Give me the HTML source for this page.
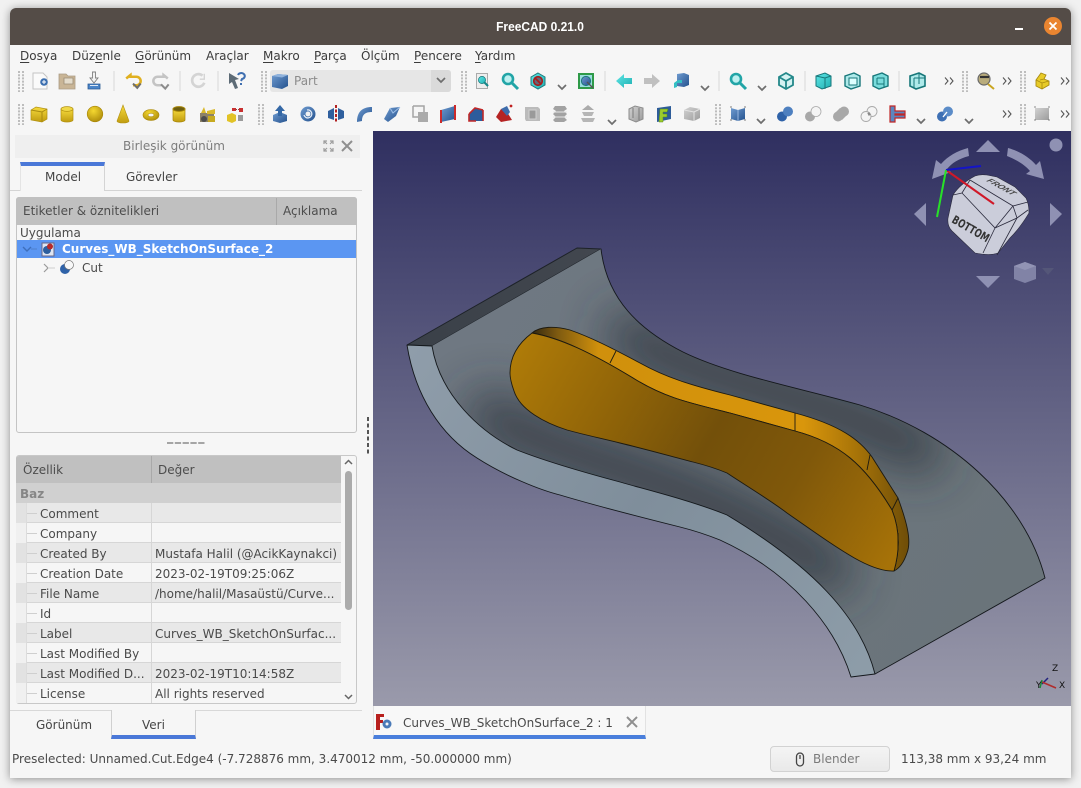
<!DOCTYPE html>
<html><head><meta charset="utf-8"><style>
html,body{margin:0;padding:0;width:1081px;height:788px;overflow:hidden;background:#f1f1f1}
*{box-sizing:border-box}
body{font-family:"DejaVu Sans","Liberation Sans",sans-serif;font-size:12px;color:#454545}
.a{position:absolute;white-space:nowrap}
#win{position:absolute;left:10px;top:8px;width:1061px;height:770px;background:#f6f6f6;border-radius:6px 6px 0 0;box-shadow:0 1px 9px rgba(0,0,0,.42)}
#tb{position:absolute;left:10px;top:8px;width:1061px;height:37px;background:#544c47;border-radius:6px 6px 0 0}
u{text-underline-offset:2px}
.m{top:49px;color:#3c3c3c;line-height:14px}
.r{position:absolute;left:16px;width:325px;height:20px;border-bottom:1px solid #d6d6d6}
.r b{position:absolute;left:135px;top:0;width:1px;height:20px;background:#d6d6d6}
.r span{position:absolute;top:4px;line-height:14px;white-space:nowrap;color:#4a4a4a}
.r i{position:absolute;left:0;top:0;width:10px;height:20px}
.r em{position:absolute;left:10px;top:0;width:1px;height:20px;background:#dcdcdc}
.r s{position:absolute;left:11px;top:10px;width:10px;height:1px;background:#cfcfcf}
</style></head><body>
<div id="win"></div><div id="tb"></div>
<div class="a" style="left:440px;width:200px;text-align:center;top:19px;color:#fff;font-weight:bold;font-size:13px;line-height:15px;font-family:'Liberation Sans',sans-serif;transform:scaleX(.92)">FreeCAD 0.21.0</div>
<div class="a" style="left:1015px;top:28px;width:8px;height:2px;background:#fff"></div>

<div class="a m" style="left:20px"><u>D</u>osya</div>
<div class="a m" style="left:72px">Düz<u>e</u>nle</div>
<div class="a m" style="left:135px"><u>G</u>örünüm</div>
<div class="a m" style="left:206px">Araçlar</div>
<div class="a m" style="left:263px"><u>M</u>akro</div>
<div class="a m" style="left:314px"><u>P</u>arça</div>
<div class="a m" style="left:361px">Ölçüm</div>
<div class="a m" style="left:414px"><u>P</u>encere</div>
<div class="a m" style="left:475px"><u>Y</u>ardım</div>

<!-- workbench combo -->
<div class="a" style="left:270px;top:70px;width:181px;height:22px;background:#e6e6e6;border-radius:3px"></div>
<div class="a" style="left:431px;top:70px;width:20px;height:22px;background:#dadada;border-radius:0 3px 3px 0"></div>
<div class="a" style="left:294px;top:74px;color:#8c8c8c;line-height:14px">Part</div>

<!-- left dock -->
<div class="a" style="left:15px;top:135px;width:345px;height:23px;background:#efefef"></div>
<div class="a" style="left:123px;top:139px;color:#7d7d7d;line-height:14px">Birleşik görünüm</div>
<div class="a" style="left:10px;top:190px;width:352px;height:1px;background:#d4d4d4"></div>
<div class="a" style="left:20px;top:162px;width:85px;height:29px;background:#f6f6f6;border-right:1px solid #d4d4d4;border-left:1px solid #e4e4e4;border-top:4px solid #4a78d8"></div>
<div class="a" style="left:45px;top:170px;line-height:14px">Model</div>
<div class="a" style="left:126px;top:170px;line-height:14px">Görevler</div>

<!-- tree -->
<div class="a" style="left:16px;top:197px;width:341px;height:236px;background:#f6f6f6;border:1px solid #c4c4c4;border-radius:3px"></div>
<div class="a" style="left:16px;top:197px;width:341px;height:28px;background:#c0c0c0;border-radius:3px 3px 0 0"></div>
<div class="a" style="left:276px;top:198px;width:1px;height:27px;background:#a9a9a9"></div>
<div class="a" style="left:23px;top:204px;color:#4d4d4d;line-height:14px">Etiketler &amp; öznitelikleri</div>
<div class="a" style="left:283px;top:204px;color:#4d4d4d;line-height:14px">Açıklama</div>
<div class="a" style="left:20px;top:226px;color:#4a4a4a;line-height:14px">Uygulama</div>
<div class="a" style="left:17px;top:240px;width:339px;height:18px;background:#5b96f2"></div>
<div class="a" style="left:62px;top:242px;color:#fff;font-weight:bold;line-height:14px">Curves_WB_SketchOnSurface_2</div>
<div class="a" style="left:82px;top:261px;color:#4a4a4a;line-height:14px">Cut</div>

<!-- properties -->
<div class="a" style="left:16px;top:455px;width:341px;height:249px;background:#f6f6f6;border:1px solid #c8c8c8;border-radius:3px"></div>
<div class="a" style="left:16px;top:456px;width:325px;height:27px;background:#c0c0c0;border-radius:3px 0 0 0"></div>
<div class="a" style="left:151px;top:456px;width:1px;height:27px;background:#a9a9a9"></div>
<div class="a" style="left:23px;top:463px;color:#4d4d4d;line-height:14px">Özellik</div>
<div class="a" style="left:158px;top:463px;color:#4d4d4d;line-height:14px">Değer</div>
<div class="a" style="left:16px;top:483px;width:325px;height:20px;background:#d0d0d0"></div>
<div class="a" style="left:20px;top:487px;color:#868686;font-weight:bold;line-height:14px">Baz</div>

<div class="r" style="top:503px;background:#e8e8e8"><i style="background:#e2e2e2"></i><em></em><s></s><b></b><span style="left:24px">Comment</span></div>
<div class="r" style="top:523px;background:#f6f6f6"><i style="background:#f0f0f0"></i><em></em><s></s><b></b><span style="left:24px">Company</span></div>
<div class="r" style="top:543px;background:#e8e8e8"><i style="background:#e2e2e2"></i><em></em><s></s><b></b><span style="left:24px">Created By</span><span style="left:139px">Mustafa Halil (@AcikKaynakci)</span></div>
<div class="r" style="top:563px;background:#f6f6f6"><i style="background:#f0f0f0"></i><em></em><s></s><b></b><span style="left:24px">Creation Date</span><span style="left:139px">2023-02-19T09:25:06Z</span></div>
<div class="r" style="top:583px;background:#e8e8e8"><i style="background:#e2e2e2"></i><em></em><s></s><b></b><span style="left:24px">File Name</span><span style="left:139px">/home/halil/Masaüstü/Curve...</span></div>
<div class="r" style="top:603px;background:#f6f6f6"><i style="background:#f0f0f0"></i><em></em><s></s><b></b><span style="left:24px">Id</span></div>
<div class="r" style="top:623px;background:#e8e8e8"><i style="background:#e2e2e2"></i><em></em><s></s><b></b><span style="left:24px">Label</span><span style="left:139px">Curves_WB_SketchOnSurfac...</span></div>
<div class="r" style="top:643px;background:#f6f6f6"><i style="background:#f0f0f0"></i><em></em><s></s><b></b><span style="left:24px">Last Modified By</span></div>
<div class="r" style="top:663px;background:#e8e8e8"><i style="background:#e2e2e2"></i><em></em><s></s><b></b><span style="left:24px">Last Modified D...</span><span style="left:139px">2023-02-19T10:14:58Z</span></div>
<div class="r" style="top:683px;height:20px;background:#f6f6f6;border-bottom:0"><i style="background:#f0f0f0"></i><em></em><s></s><b></b><span style="left:24px">License</span><span style="left:139px">All rights reserved</span></div>

<!-- scrollbar -->
<div class="a" style="left:345px;top:471px;width:7px;height:139px;background:#ababab;border-radius:4px"></div>

<!-- bottom tabs -->
<div class="a" style="left:10px;top:710px;width:352px;height:1px;background:#d8d8d8"></div>
<div class="a" style="left:111px;top:710px;width:85px;height:29px;background:#f6f6f6;border-left:1px solid #d0d0d0;border-right:1px solid #d0d0d0;border-bottom:4px solid #4a78d8"></div>
<div class="a" style="left:36px;top:718px;line-height:14px">Görünüm</div>
<div class="a" style="left:142px;top:718px;line-height:14px">Veri</div>

<!-- viewport -->
<div class="a" style="left:373px;top:131px;width:698px;height:575px;background:linear-gradient(#2f2f60,#9a9aab)"></div>

<!-- MDI tab -->
<div class="a" style="left:373px;top:706px;width:273px;height:33px;background:#f8f8f8;border-left:1px solid #e2e2e2;border-right:1px solid #e2e2e2;border-bottom:4px solid #4a7fdc"></div>
<div class="a" style="left:403px;top:716px;color:#4a4a4a;line-height:14px">Curves_WB_SketchOnSurface_2 : 1</div>

<!-- status -->
<div class="a" style="left:12px;top:752px;color:#4a4a4a;line-height:14px">Preselected: Unnamed.Cut.Edge4 (-7.728876 mm, 3.470012 mm, -50.000000 mm)</div>
<div class="a" style="left:770px;top:746px;width:120px;height:26px;background:linear-gradient(#f4f4f4,#e9e9e9);border:1px solid #d2d2d2;border-radius:4px"></div>
<div class="a" style="left:813px;top:752px;color:#7a7a7a;line-height:14px">Blender</div>
<div class="a" style="left:901px;top:752px;color:#4a4a4a;line-height:14px">113,38 mm x 93,24 mm</div>

<svg class="a" style="left:0;top:0" width="1081" height="788" viewBox="0 0 1081 788" xmlns="http://www.w3.org/2000/svg">
<defs>
<linearGradient id="gd" x1="0" y1="0" x2="0" y2="1"><stop offset="0" stop-color="#f6da3c"/><stop offset="1" stop-color="#c09c10"/></linearGradient>
<radialGradient id="gs" cx=".4" cy=".3" r=".8"><stop offset="0" stop-color="#f5d830"/><stop offset="1" stop-color="#a88608"/></radialGradient>
<linearGradient id="bl" x1="0" y1="0" x2="1" y2="1"><stop offset="0" stop-color="#6f9bd0"/><stop offset="1" stop-color="#24528e"/></linearGradient>
<linearGradient id="te" x1="0" y1="0" x2="1" y2="1"><stop offset="0" stop-color="#5fe6e6"/><stop offset="1" stop-color="#1fb0b2"/></linearGradient>
<linearGradient id="gr" x1="0" y1="0" x2="1" y2="1"><stop offset="0" stop-color="#d2d2d2"/><stop offset="1" stop-color="#9c9c9c"/></linearGradient>
<linearGradient id="fl" gradientUnits="userSpaceOnUse" x1="510" y1="350" x2="885" y2="570"><stop offset="0" stop-color="#b07c08"/><stop offset=".25" stop-color="#936608"/><stop offset=".5" stop-color="#73500a"/><stop offset=".72" stop-color="#80580a"/><stop offset="1" stop-color="#a67208"/></linearGradient>
<linearGradient id="wa" gradientUnits="userSpaceOnUse" x1="535" y1="0" x2="908" y2="0"><stop offset="0" stop-color="#3c2e10"/><stop offset=".06" stop-color="#7e5a10"/><stop offset=".17" stop-color="#d0900c"/><stop offset=".72" stop-color="#d9960c"/><stop offset=".86" stop-color="#a87408"/><stop offset="1" stop-color="#6f4e08"/></linearGradient>
<linearGradient id="st" gradientUnits="userSpaceOnUse" x1="410" y1="350" x2="860" y2="670"><stop offset="0" stop-color="#8f9daa"/><stop offset=".5" stop-color="#7f8e9b"/><stop offset="1" stop-color="#8d9ca8"/></linearGradient>
<linearGradient id="su" gradientUnits="userSpaceOnUse" x1="500" y1="280" x2="1000" y2="620"><stop offset="0" stop-color="#6f7882"/><stop offset="1" stop-color="#6a747a"/></linearGradient>
<linearGradient id="to" gradientUnits="userSpaceOnUse" x1="407" y1="345" x2="600" y2="250"><stop offset="0" stop-color="#3a4048"/><stop offset="1" stop-color="#42474f"/></linearGradient>
<filter id="blur" filterUnits="userSpaceOnUse" x="373" y="200" width="698" height="500"><feGaussianBlur stdDeviation="24"/></filter>
<clipPath id="scl"><path d="M432,346 L601,249 C607,300 640,330 683,352 C730,375 800,388 860,405 C950,432 1025,500 1045,578 L875,674 C860,615 810,565 727,515 C690,500 640,488 620,482 C590,474 550,463 517,450 C480,432 440,395 432,346Z"/></clipPath>

<g id="chev"><path d="M-4,-2 L0,2 L4,-2" fill="none" stroke="#6e6e6e" stroke-width="1.7"/></g>
<g id="dchev"><path d="M-4,-3.5 L-1,0 L-4,3.5 M1,-3.5 L4,0 L1,3.5" fill="none" stroke="#555" stroke-width="1.1"/></g>
<g id="grip"><path d="M-2,-10V11M2,-10V11" stroke="#bdbdbd" stroke-width="2" stroke-dasharray="2 1.2"/></g>
<g id="sep"><path d="M0,-10V10" stroke="#d8d8d8" stroke-width="1"/></g>
<g id="teal"><path d="M-7,-5 L2,-8 L8,-5 L8,5 L-1,8 L-7,5Z" fill="url(#te)" stroke="#17777a" stroke-width="1"/></g>
</defs>

<!-- close button -->
<circle cx="1053" cy="26" r="9" fill="#ea8530"/>
<path d="M1049.5,22.5 L1056.5,29.5 M1056.5,22.5 L1049.5,29.5" stroke="#fff" stroke-width="1.8"/>

<!-- combo -->
<g transform="translate(280,81)"><path d="M-8,-5 L-2,-7 L8,-6 L8,5 L2,8 L-8,6Z" fill="url(#bl)"/><path d="M-8,-5 L-2,-7 L8,-6 L2,-3.5Z" fill="#8fb2dc"/></g>
<use href="#chev" x="441" y="80"/>

<!-- splitter -->
<path d="M167,443 H205" stroke="#8a8a8a" stroke-width="1.6" stroke-dasharray="6.300 1.500"/>

<!-- grips -->
<use href="#grip" x="21" y="81"/><use href="#grip" x="264" y="81"/><use href="#grip" x="464" y="81"/><use href="#grip" x="965" y="81"/><use href="#grip" x="1023" y="81"/>
<use href="#grip" x="21" y="114"/><use href="#grip" x="261" y="114"/><use href="#grip" x="718" y="114"/><use href="#grip" x="1023" y="114"/>
<!-- seps -->
<use href="#sep" x="114" y="81"/><use href="#sep" x="180" y="81"/><use href="#sep" x="218" y="81"/><use href="#sep" x="605" y="81"/><use href="#sep" x="719" y="81"/><use href="#sep" x="805" y="81"/><use href="#sep" x="899" y="81"/>

<!-- row 1 -->
<g transform="translate(40,81)"><path d="M-7,-8 H3 L7,-4 V8 H-7Z" fill="#fafafa" stroke="#c4c4c4"/><circle cx="4" cy="1" r="3.8" fill="#3c6fb0"/><path d="M2,1H6M4,-1V3" stroke="#fff"/></g>
<g transform="translate(67,81)"><path d="M-8,-7 H-1 L1,-5 H8 V8 H-8Z" fill="#c9b596" stroke="#ab9c85" stroke-width=".8"/><path d="M-3,-3H6V3H-3Z" fill="#e4dccc" stroke="#9b8c75" stroke-width=".8"/></g>
<g transform="translate(94,81)"><path d="M-1.500,-9 H1.500 V-3 H4 L0,2 L-4,-3 H-1.500Z" fill="#f2f2f2" stroke="#808080" stroke-width=".9"/><path d="M-6,3 H6 V8 H-6Z" fill="#4a84c8" stroke="#2b5a94" stroke-width=".8"/><path d="M-4,4.500 H4" stroke="#dde8f5" /></g>
<g transform="translate(133,81) scale(.85)"><path d="M-8,-3 L-3,-7 V-5 H4 A5,5 0 0 1 4,5 H0" fill="none" stroke="#e0b020" stroke-width="3"/><path d="M0,3 L5,8 L9,3" fill="none" stroke="#6e6e6e" stroke-width="2.400"/></g>
<g transform="translate(161,81) scale(.85)"><path d="M8,-3 L3,-7 V-5 H-4 A5,5 0 0 0 -4,5 H0" fill="none" stroke="#c4c4c4" stroke-width="3"/><path d="M0,4 L5,9 L9,4" fill="none" stroke="#8c8c8c" stroke-width="2.400"/></g>
<g transform="translate(198,81) scale(.9)"><path d="M5,-6 A7,7 0 1 0 7,2" fill="none" stroke="#d4d4d4" stroke-width="3"/><path d="M2,-2 H7 V-8" fill="none" stroke="#d4d4d4" stroke-width="1.500"/></g>
<g transform="translate(237,81)"><path d="M-8,-8 L2,-2 L-2,-1 L1,7 L-2,8 L-5,1 L-8,3Z" fill="#5d6b76"/><path d="M1,-6 A3.500,3 0 1 1 5,-2 L4,0 M4,2V4" fill="none" stroke="#3f6fb0" stroke-width="2"/></g>

<g transform="translate(482,81)"><path d="M-5.500,-7.500 H5.500 V7.500 H-5.500Z" fill="#eee" stroke="#aaa"/><circle cx="0" cy="-1" r="3.600" fill="url(#te)" stroke="#17777a" stroke-width=".7"/><path d="M2,1 L6,5" stroke="#17888a" stroke-width="2.200"/></g>
<g transform="translate(510,81)"><circle cx="-2" cy="-2" r="5" fill="#bdf0f0" stroke="#22a5a7" stroke-width="2.600"/><path d="M2,2 L8,8" stroke="#22a5a7" stroke-width="3"/></g>
<g transform="translate(538,81)"><path d="M0,-8 L7,-4 V4 L0,8 L-7,4 V-4Z" fill="url(#te)" stroke="#1c7a7c"/><circle r="4.300" fill="#666878" stroke="#a81c1c" stroke-width="1.600"/><path d="M-3,-3 L3,3" stroke="#a81c1c" stroke-width="1.600"/></g>
<use href="#chev" x="562" y="87"/>
<g transform="translate(586,81)"><path d="M-7,-7 H7 V7 H-7Z" fill="#9adede" stroke="#2e9a48" stroke-width="2"/><circle cy="0" r="4.600" fill="url(#bl)" stroke="#1c7a7c"/><path d="M1,1 L7,7" stroke="#555" stroke-width="1.400"/></g>
<g transform="translate(624,81)"><path d="M-8,0 L0,-7 V-3 H8 V3 H0 V7Z" fill="url(#te)"/></g>
<g transform="translate(652,81)"><path d="M8,0 L0,-7 V-3 H-8 V3 H0 V7Z" fill="#c0c0c0"/></g>
<g transform="translate(681,81)"><path d="M-4,-7 L3,-8 L8,-6 V4 L3,6 L-4,5Z" fill="url(#bl)"/><path d="M-7,7 V2 L-3,-1 H1 V2 H-4 V6Z" fill="#34c0c4"/></g>
<use href="#chev" x="705" y="88"/>
<g transform="translate(738,81)"><circle cx="-2" cy="-2" r="5" fill="#bdf0f0" stroke="#22a5a7" stroke-width="2.600"/><path d="M2,2 L8,8" stroke="#22a5a7" stroke-width="3"/></g>
<use href="#chev" x="762" y="88"/>
<g id="iso" transform="translate(786,81)" fill="none" stroke="#23888a" stroke-width="1.800"><path d="M0,-8 L7,-4 V4 L0,8 L-7,4 V-4Z" fill="#d4f2f2"/><path d="M-7,-4 L0,0 L7,-4 M0,0 V8"/></g>
<g transform="translate(823,81)"><use href="#teal"/><path d="M-7,-5 L2,-3 L8,-5 M2,-3 V8" stroke="#17777a" fill="none"/></g>
<g transform="translate(852,81)"><path d="M-7,-5 L2,-8 L8,-5 L8,5 L-1,8 L-7,5Z" fill="#aeeaea" stroke="#17777a" stroke-width="1.400"/><path d="M-3,-3 H5 V4 H-3Z" fill="#dff" stroke="#17777a"/></g>
<g transform="translate(880,81)"><path d="M-7,-5 L2,-8 L8,-5 L8,5 L-1,8 L-7,5Z" fill="#7adcdc" stroke="#17777a" stroke-width="1.400"/><path d="M-3,-3 H4 V7 M-3,-3 V3 H4" fill="none" stroke="#17777a"/></g>
<g transform="translate(917,81)"><path d="M-7,-5 L2,-8 L8,-5 L8,5 L-1,8 L-7,5Z" fill="#aeeaea" stroke="#17777a" stroke-width="1.600"/><path d="M-3,-3 H8 M-3,-3 V7 M2,-8 V3" fill="none" stroke="#17777a"/></g>
<use href="#dchev" x="949" y="81"/>
<g transform="translate(985,81)"><circle cx="-1" cy="-2" r="6" fill="#b9ac7c" stroke="#6a6a6a" stroke-width="1.200"/><path d="M-5,-4 H4" stroke="#333" stroke-width="2.200"/><path d="M3,3 L9,8" stroke="#c9a520" stroke-width="2"/></g>
<use href="#dchev" x="1007" y="81"/>
<g transform="translate(1042,81)"><path d="M-6,-1 L-1,-8 L4,-6 L2,-2 L7,0 V4 L0,8 L-6,5Z" fill="#e8cb28" stroke="#a88a10" stroke-width=".9"/><path d="M-6,-1 L0,2 L7,0 M0,2 V8 M-2,-1 L2,-2" fill="none" stroke="#a88a10" stroke-width=".8"/></g>
<use href="#dchev" x="1065" y="81"/>

<!-- row 2 gold primitives -->
<g transform="translate(39,114)"><path d="M-8,-4 L-3,-7 L8,-5 V5 L3,8 L-8,6Z" fill="url(#gd)" stroke="#b29110" stroke-width=".7"/><path d="M-8,-4 L3,-2 L8,-5 M3,-2 V8" fill="none" stroke="#a88a10"/></g>
<g transform="translate(67,114)"><path d="M-6,-5 V6 A6,2 0 0 0 6,6 V-5Z" fill="url(#gd)" stroke="#b29110" stroke-width=".7"/><ellipse cy="-5" rx="6" ry="2.400" fill="#f0d848" stroke="#b29110" stroke-width=".7"/></g>
<circle cx="95" cy="114" r="7.800" fill="url(#gs)" stroke="#a88608" stroke-width=".6"/>
<path d="M123,105 L129,121 A6,2 0 0 1 117,121Z" fill="url(#gd)" stroke="#b29110" stroke-width=".6"/>
<g transform="translate(151,115)"><ellipse rx="8" ry="5.500" fill="url(#gs)" stroke="#a88608" stroke-width=".6"/><ellipse rx="3" ry="1.800" fill="#f6f6f6" stroke="#a88608" stroke-width=".6"/></g>
<g transform="translate(179,114)"><path d="M-6,-5 V6 A6,2 0 0 0 6,6 V-5Z" fill="url(#gd)" stroke="#a88608" stroke-width=".7"/><ellipse cy="-5" rx="6" ry="2.400" fill="#6d5e10" stroke="#a88608" stroke-width="1"/></g>
<g transform="translate(207,115)"><path d="M-7,-2 H7 V7 H-7Z" fill="#8c8268"/><path d="M-3,-8 L-1,-2 H-6Z" fill="#d9b92a"/><path d="M0,-4 L8,-6 V-1 H0Z" fill="#d9b92a"/><circle cx="-3" cy="4" r="3" fill="#4d4d4d"/><path d="M1,1 H8 V7 H1Z" fill="#c7aa20"/></g>
<g transform="translate(235,115)"><path d="M-8,0 L-3,-2 L1,0 V6 L-3,8 L-8,6Z" fill="#e2c326"/><path d="M4,-7 H8 V-3 H4Z M-3,-7 H1 V-4 H-3Z" fill="#c83030"/><path d="M3,0 H8 V6 H3Z" fill="#9a9a9a"/><path d="M1,-5.500 H4" stroke="#8c4040" stroke-dasharray="1 1"/></g>

<!-- row 2 part -->
<g transform="translate(280,114)"><path d="M-7,1 L0,-2 L7,1 V7 L0,9 L-7,7Z" fill="url(#bl)"/><path d="M0,-9 L5,-3 H2 V2 H-2 V-3 H-5Z" fill="#3468a6"/></g>
<g transform="translate(308,114)"><circle r="7.500" fill="url(#bl)"/><circle r="2.500" fill="#f2f2f2"/><path d="M-1,-4 A4,4 0 1 1 -4,1" fill="none" stroke="#e6eef8" stroke-width="1.300"/></g>
<g transform="translate(336,114)"><path d="M-8,-3 L-2,-6 V6 L-8,4Z M8,-3 L2,-6 V6 L8,4Z" fill="#2f5f9e"/><path d="M0,-9 V9" stroke="#b22222" stroke-width="2" stroke-dasharray="3 1.500"/></g>
<g transform="translate(364,114)"><path d="M-7,8 C-7,-2 -2,-7 8,-7 V-2 C2,-2 -2,0 -2,7Z" fill="url(#bl)"/></g>
<g transform="translate(392,114)"><path d="M-8,5 L-2,-6 L8,-7 L4,2 L-4,8Z" fill="url(#bl)"/><path d="M-2,-6 L1,-1 L8,-7" fill="none" stroke="#9fc0e8"/></g>
<g transform="translate(420,114)"><path d="M-7,-8 H4 V-1 M-7,-8 V3 H-1" fill="#f4f4f4" stroke="#a4a4a4" stroke-width="1.500"/><path d="M-2,-2 H8 V8 H-2Z" fill="#aaa"/></g>
<g transform="translate(448,114)"><path d="M-7,-4 L7,-8 V5 L-7,8Z" fill="url(#bl)"/><path d="M-7,-4 V9 M7,-9 V6" stroke="#cc2a2a" stroke-width="2"/></g>
<g transform="translate(476,115)"><path d="M-7,-1 L-1,-7 L7,-5 V6 L-7,6Z" fill="#2c5c9c"/><path d="M-7,-1 L-1,-7 L7,-5 M-7,-1 V6 H0 M7,-5 V6" fill="none" stroke="#c02828" stroke-width="1.600"/></g>
<g transform="translate(504,114)"><path d="M-8,3 L-3,-5 L3,-2 L8,6 L-3,8Z" fill="#b52424"/><path d="M-3,-5 L3,-8 L6,-2 L3,2Z" fill="#3d6cab"/><circle cx="7" cy="-8" r="1.400" fill="#c02020"/></g>
<g transform="translate(532,114)"><path d="M-7,-7 H6 L8,-5 V7 H-6 L-7,5Z" fill="#bbb"/><path d="M-3,-4 H4 V5 H-3Z" fill="#9a9a9a" stroke="#d0d0d0"/></g>
<g transform="translate(560,114)"><path d="M-5,-8 H5 L7,-5 L4,-3 L7,0 L4,3 L7,6 L4,8 H-5 L-7,6 L-4,3 L-7,0 L-4,-3 L-7,-5Z" fill="#a2a2a2"/><path d="M-7,-2 H7 M-7,3 H7" stroke="#e6e6e6"/></g>
<g transform="translate(588,114)"><path d="M0,-9 L6,-4 H-6Z" fill="#ababab"/><path d="M-6,-2 H6 L4,2 H-4Z M-7,4 H7 L5,8 H-5Z" fill="#b6b6b6"/></g>
<use href="#chev" x="612" y="122"/>
<g transform="translate(636,114)"><path d="M-7,-5 L-1,-8 L7,-6 V5 L0,8 L-7,5Z" fill="url(#gr)" stroke="#8c8c8c"/><path d="M-3,-6 V4 M3,-6 V6" stroke="#7a7a7a"/></g>
<g transform="translate(664,114)"><path d="M-7,-6 L7,-8 V5 L-7,8Z" fill="#2d5c99"/><path d="M-4,-5 H4 L3,-2 H-1 V0 H3 V3 H-1 V8 H-5Z" fill="#9ccc2c" stroke="#5a8a14" stroke-width=".5"/></g>
<g transform="translate(692,114)"><path d="M-8,-4 L-2,-7 L8,-5 V4 L2,7 L-8,5Z" fill="url(#gr)"/><path d="M-8,-4 L2,-2 L8,-5 M2,-2 V7" fill="none" stroke="#e2e2e2"/></g>
<g transform="translate(738,114)"><path d="M-7,-6 L0,-4 L7,-6 V5 L0,7 L-7,5Z" fill="url(#bl)"/><path d="M0,-4 V7" stroke="#9ab8e0"/><path d="M-8,-7 h2 M6,-7 h2 M-8,6 h2 M6,6 h2" stroke="#555" stroke-width=".8"/></g>
<use href="#chev" x="761" y="121"/>
<g transform="translate(785,114)"><circle cx="-3" cy="2.500" r="5" fill="#2f62a8"/><circle cx="3" cy="-2.500" r="5" fill="#4e80c0"/></g>
<g transform="translate(813,114)"><circle cx="-3" cy="2.500" r="5" fill="#a8a8a8"/><circle cx="3" cy="-2.500" r="5" fill="#f4f4f4" stroke="#aaa" stroke-width=".8"/></g>
<g transform="translate(841,114)"><circle cx="-3" cy="2.500" r="5" fill="#a8a8a8"/><circle cx="3" cy="-2.500" r="5" fill="#a8a8a8"/><path d="M-6,-1 L1,6 L6,1 L-1,-6Z" fill="#a8a8a8"/></g>
<g transform="translate(869,114)" fill="#f4f4f4" stroke="#aaa" stroke-width=".9"><circle cx="3" cy="-2.500" r="5"/><circle cx="-3" cy="2.500" r="5"/><path d="M1,-.5 L-1,.5" stroke="#888" stroke-width="3"/></g>
<g transform="translate(897,114)"><path d="M-7,-8 H-2 V-3 H8 V0 H-2 V1 H8 V4 H-2 V8 H-7Z" fill="#5b86c0" stroke="#c02828" stroke-width="1.200"/></g>
<use href="#chev" x="921" y="121"/>
<g transform="translate(945,114)"><circle cx="-3" cy="2.500" r="5" fill="#3e70b4"/><circle cx="3" cy="-2.500" r="5" fill="#5b8cc8"/><path d="M-2,3 L2,-2" stroke="#fff" stroke-width="1.400"/></g>
<use href="#chev" x="969" y="121"/>
<use href="#dchev" x="1007" y="114"/>
<g transform="translate(1042,114)"><path d="M-7,-6 H7 V6 H-7Z" fill="url(#gr)"/><path d="M-8,-7 h2 M6,-7 h2 M-8,6 h2 M6,6 h2" stroke="#666" stroke-width=".8"/></g>
<use href="#dchev" x="1065" y="114"/>

<!-- dock title icons -->
<g stroke="#9c9c9c" fill="none" stroke-width="1.200"><path d="M324,144 V141 H327 M330,141 H333 V144 M333,148 V151 H330 M327,151 H324 V148 M324,141 L327,144 M333,141 L330,144 M333,151 L330,148 M324,151 L327,148"/></g>
<path d="M342,141 L352,151 M352,141 L342,151" stroke="#8f8f8f" stroke-width="2"/>

<!-- tree icons -->
<path d="M23,247 L27,251 L31,247" fill="none" stroke="#3e6fbc" stroke-width="1.400"/><path d="M31,249 H37" stroke="#4f80cc"/>
<g transform="translate(48,249)"><path d="M-6,-6 H6 V7 H-6Z" fill="#dfe6f2" stroke="#668"/><circle cx="-1" cy="1" r="4" fill="#2d5f9e"/><circle cx="2" cy="-2.500" r="3" fill="#b62a2a"/></g>
<path d="M44,264 L48,268 L44,272" fill="none" stroke="#9a9a9a" stroke-width="1.200"/><path d="M48,268 H55" stroke="#cfcfcf"/>
<g transform="translate(67,267)"><circle cx="-2" cy="2" r="5" fill="#2f62a8"/><circle cx="2" cy="-2" r="4.500" fill="#f8f8f8" stroke="#777" stroke-width=".7"/></g>

<!-- prop scrollbar arrows -->
<path d="M345,464 L348.500,460.500 L352,464" fill="none" stroke="#666" stroke-width="1.500"/>
<path d="M345,695 L348.500,698.500 L352,695" fill="none" stroke="#666" stroke-width="1.500"/>

<!-- side splitter -->
<path d="M368,417 V454" stroke="#555" stroke-width="2" stroke-dasharray="4 2.500"/>

<!-- model -->
<g stroke-linejoin="round">
<path d="M407,345 L577,248 L601,249 L432,346Z" fill="url(#to)" stroke="#1d2228" stroke-width="1"/>
<path d="M407,345 C415,395 440,435 477,458 C505,476 540,490 560,495 C590,504 640,517 680,527 C700,532 715,538 720,540 C790,572 835,625 851,677 L875,674 C860,615 810,565 727,515 C690,500 640,488 620,482 C590,474 550,463 517,450 C480,432 440,395 432,346Z" fill="url(#st)"/>
<path d="M432,346 L601,249 C607,300 640,330 683,352 C730,375 800,388 860,405 C950,432 1025,500 1045,578 L875,674 C860,615 810,565 727,515 C690,500 640,488 620,482 C590,474 550,463 517,450 C480,432 440,395 432,346Z" fill="url(#su)"/>
<g clip-path="url(#scl)"><path d="M490,415 C560,460 680,470 830,570 M630,335 C700,385 800,385 920,450" fill="none" stroke="#2e363e" stroke-width="48" stroke-linecap="round" filter="url(#blur)" opacity=".85"/></g>
<!-- wall -->
<path d="M532,333 C540,326 555,326 570,330 C590,337 610,347 640,363 C665,377 690,385 730,395 L795,413 C840,425 860,440 872,457 L898,498 C906,520 912,540 907,553 C904,562 900,568 894,571 C900,550 900,530 892,510 C865,465 840,443 795,431 L730,413 C690,403 665,398 633,378 C590,352 560,338 532,333Z" fill="url(#wa)" stroke="#1d1a10" stroke-width=".9"/>
<!-- floor -->
<path d="M532,333 C560,338 590,352 633,378 C665,398 690,403 730,413 L795,431 C840,443 865,465 892,510 C900,530 900,550 894,571 C870,572 840,550 787,513 C770,500 745,485 727,473 C715,468 705,465 693,462 C670,456 645,449 620,443 C600,438 585,435 567,430 C545,423 520,410 514,391 C510,380 510,376 510,373 C510,355 520,342 532,333Z" fill="url(#fl)" stroke="#1d1a10" stroke-width=".9"/>
<path d="M610,363 L616,351 M795,431 V413 M867,470 L870,455 M892,510 L898,498 M898,533 V550" stroke="#1d1a10" stroke-width=".9" fill="none"/>
<!-- outlines -->
<path d="M407,345 C415,395 440,435 477,458 C505,476 540,490 560,495 C590,504 640,517 680,527 C700,532 715,538 720,540 C790,572 835,625 851,677 L875,674 C860,615 810,565 727,515 C690,500 640,488 620,482 C590,474 550,463 517,450 C480,432 440,395 432,346 L407,345" fill="none" stroke="#14181c" stroke-width=".9"/>
<path d="M601,249 C607,300 640,330 683,352 C730,375 800,388 860,405 C950,432 1025,500 1045,578 L875,674" fill="none" stroke="#14181c" stroke-width=".9"/>
</g>

<!-- nav cube -->
<g fill="#8f91b3">
<path d="M988,140 L976,152 H1000Z"/><path d="M976,276 H1000 L988,288Z"/><path d="M926,203 V226 L914,214Z"/><path d="M1050,203 V226 L1062,214Z"/>
<circle cx="1056" cy="145" r="6.500"/>
<path d="M968,148 L969,156 C958,159 952,163 947,169 L951,172 L932,179 L936,160 L941,164 C948,156 957,151 968,148Z"/>
<path d="M1008,148 L1007,156 C1017,160 1025,165 1030,171 L1026,174 L1044,179 L1040,161 L1036,165 C1029,157 1019,151 1008,148Z"/>
</g>
<path d="M975,176 Q980,174 987,175 L997,177 L1015,187 L1026,198 Q1029,204 1029,213 Q1020,228 1010,238 L998,253 Q990,256 975,253 L952,231 Q947,226 948,218 L953,195 Q960,184 975,176Z" fill="#cbcdda" stroke="#2a2a3c" stroke-width=".6"/>
<path d="M970,180 L962,193 L995,228 L983,253 M995,228 L1013,206 L1028,202 M1013,206 L1017,218 L997,255 M995,228 L1017,218 M970,180 L1013,206 M962,193 L953,195 M1017,218 L1028,210" fill="none" stroke="#2a2a3c" stroke-width=".8"/>
<text transform="translate(951,222) rotate(30)" font-family="DejaVu Sans,sans-serif" font-size="11.500" font-weight="bold" fill="#333" textLength="41" lengthAdjust="spacingAndGlyphs">BOTTOM</text>
<text transform="translate(986,181) rotate(29) skewX(-30) scale(1,.7)" font-family="Liberation Sans,sans-serif" font-size="10" font-weight="bold" font-style="italic" fill="#444" textLength="30" lengthAdjust="spacingAndGlyphs">FRONT</text>
<path d="M946,170 L994,204" stroke="#d01828" stroke-width="2"/>
<path d="M946,170 L981,166" stroke="#1414c8" stroke-width="2"/>
<path d="M946,170 L937,217" stroke="#28e028" stroke-width="2"/>
<g transform="translate(1025,272)"><path d="M-11,-6 L0,-10 L11,-6 V7 L0,11 L-11,7Z" fill="#8183a6"/><path d="M-11,-6 L0,-10 L11,-6 L0,-2Z" fill="#9294b4"/></g>
<path d="M1042,268 H1054 L1048,275Z" fill="#545678"/>

<!-- small axes -->
<path d="M1042,684 L1048,678" stroke="#22227e" stroke-width="1.500"/><path d="M1042,682 L1056,688" stroke="#b02c2c" stroke-width="1.500"/><path d="M1042,680 L1040,688" stroke="#1c8a3c" stroke-width="1.500"/>
<text x="1052" y="671" font-family="DejaVu Sans,sans-serif" font-size="9" fill="#111">Z</text>
<text x="1036" y="688" font-family="DejaVu Sans,sans-serif" font-size="9" fill="#111">Y</text>
<text x="1059" y="688" font-family="DejaVu Sans,sans-serif" font-size="9" fill="#111">X</text>

<!-- tab icon -->
<g transform="translate(385,722)"><path d="M-9,-8 H-1 V-5 H-5 V-2 H-2 V1 H-5 V8 H-9Z" fill="#b8201e"/><circle cx="2" cy="2" r="4.500" fill="#4a7ab8"/><circle cx="2" cy="2" r="1.500" fill="#f6f6f6"/></g>
<path d="M627,717 L637,727 M637,717 L627,727" stroke="#8f8f8f" stroke-width="2"/>

<!-- blender icon -->
<rect x="796.500" y="753" width="7" height="13" rx="3.500" fill="#eee" stroke="#444" stroke-width="1.300"/><path d="M800,755 V759" stroke="#444" stroke-width="1.300"/>
</svg>
</body></html>
